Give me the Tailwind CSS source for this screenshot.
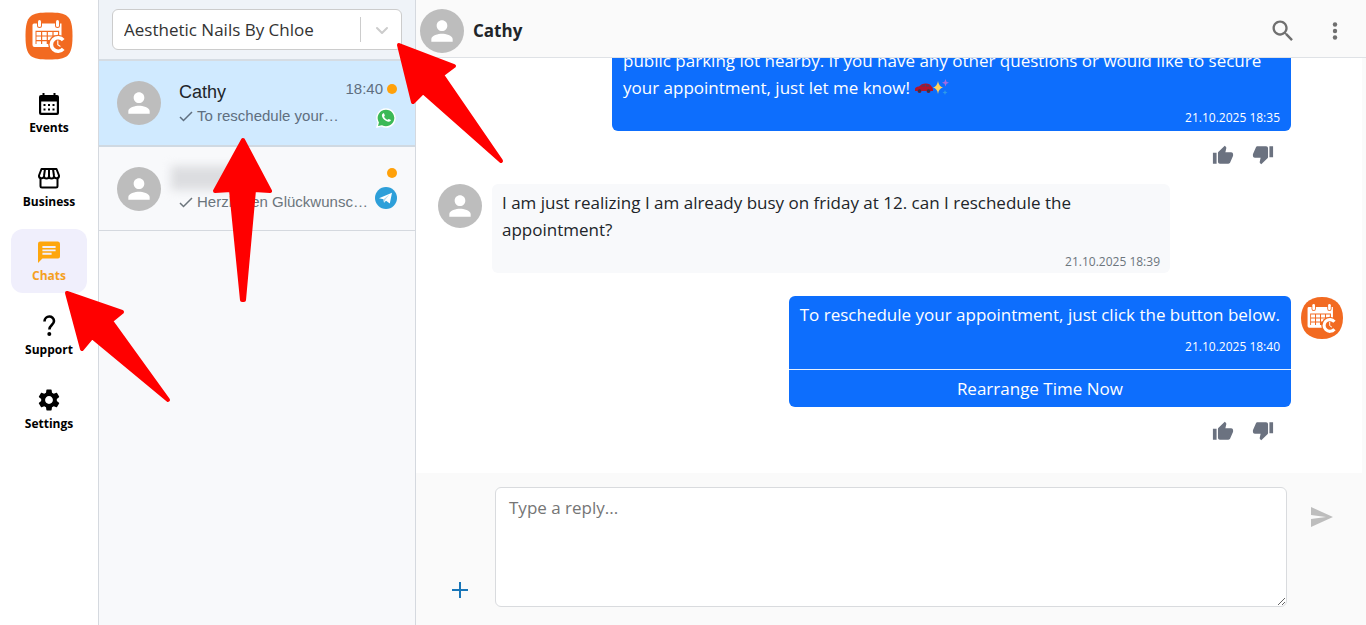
<!DOCTYPE html>
<html lang="en">
<head>
  <meta charset="UTF-8">
  <meta name="viewport" content="width=device-width, initial-scale=1.0">
  <title>Chats</title>
  <script src="https://cdn.jsdelivr.net/npm/@tailwindcss/browser@4"></script>
</head>
<body class="relative h-screen flex overflow-hidden bg-white text-[#212529] font-['Open_Sans','Noto_Sans',sans-serif]">

  <!-- Shared icons -->
  <svg class="hidden" aria-hidden="true">
    <symbol id="person" viewBox="0 0 24 24">
      <path d="M12 12c2.21 0 4-1.79 4-4s-1.79-4-4-4-4 1.79-4 4 1.79 4 4 4zm0 2c-2.67 0-8 1.34-8 4v2h16v-2c0-2.66-5.33-4-8-4z"/>
    </symbol>
    <symbol id="thumb-up" viewBox="0 0 24 24">
      <path d="M1 21.500h4V9.600H1zM23 11.200c0-1.200-1-2.100-2.100-2.100h-6.300l1-4.600v-.4c0-.4-.2-.8-.5-1.100L13.900 1.800 7.100 8.400c-.4.4-.6.9-.6 1.500v9.500c0 1.200 1 2.100 2.100 2.100h9.300c.9 0 1.600-.5 1.900-1.300l3.100-7c.1-.2.1-.5.1-.8z"/>
    </symbol>
    <symbol id="logo-mark" viewBox="0 0 48 48">
      <g fill="#fff">
        <rect x="13" y="8" width="3" height="7" rx="1.500"/>
        <rect x="31" y="8" width="3" height="7" rx="1.500"/>
        <path d="M9 11.500h3v2a2.500 2.500 0 0 0 5 0v-2h13v2a2.500 2.500 0 0 0 5 0v-2h1.500V24h-2.300v-5.200H10.500V32H25v3H9.500Q7.500 35 7.500 33V13q0-1.500 1.500-1.500z"/>
        <path d="M11.500 20h4.500v3.500h-4.500zM17.200 20h4.500v3.500h-4.500zM22.900 20h4.500v3.500h-4.500zM28.600 20h4.400v3.500h-4.400zM11.500 24.600h4.500v3.500h-4.500zM17.200 24.600h4.500v3.500h-4.500zM22.900 24.600h4.500v3.500h-4.500zM11.500 29.200h4.500V32h-4.500zM17.200 29.200h4.500V32h-4.500z"/>
      </g>
      <circle cx="33" cy="32.500" r="9.800" fill="#f26a21"/>
      <path d="M38.200 28.200A6.700 6.700 0 1 0 38.200 36.800" fill="none" stroke="#fff" stroke-width="3.600"/>
      <path d="M32.800 28.500v4.300l2.600 1.700" fill="none" stroke="#fff" stroke-width="1.100"/>
    </symbol>
  </svg>

  <!-- Main navigation -->
  <nav class="w-[99px] shrink-0 border-r border-[#d5d9df] bg-white flex flex-col items-center pt-3">
    <a href="#" aria-label="Home" class="block size-12">
      <svg class="size-12" viewBox="0 0 48 48">
        <path d="M24 .5C42 .5 47.500 3 47.500 24S42 47.500 24 47.500 .5 45 .5 24 6 .5 24 .5z" fill="#f26a21"/>
        <use href="#logo-mark"/>
      </svg>
    </a>

    <div class="mt-[21px] flex flex-col gap-2.5 text-xs leading-4 font-bold text-black">
      <a href="#" class="w-[76px] h-16 flex flex-col items-center pt-[11px] gap-1">
        <svg class="size-6" viewBox="0 0 24 24" fill="currentColor">
          <path fill-rule="evenodd" d="M5.500 1h2v2h9V1h2v2H20a2 2 0 0 1 2 2v16a2 2 0 0 1-2 2H4a2 2 0 0 1-2-2V5a2 2 0 0 1 2-2h1.500zM4.200 9.500V20.800h15.600V9.500z"/>
          <path d="M6.500 12h2v2h-2zM11 12h2v2h-2zM15.500 12h2v2h-2zM6.500 16.500h2v2h-2zM11 16.500h2v2h-2zM15.500 16.500h2v2h-2z"/>
        </svg>
        Events
      </a>
      <a href="#" class="w-[76px] h-16 flex flex-col items-center pt-[11px] gap-1">
        <svg class="size-6" viewBox="0 0 24 24" fill="none" stroke="currentColor" stroke-width="2" stroke-linejoin="round">
          <path d="M4.500 3h15L22 9.500a2.500 2.500 0 0 1-5 .5 2.500 2.500 0 0 1-5 0 2.500 2.500 0 0 1-5 0 2.500 2.500 0 0 1-5-.5zM8 3l-1 7M12 3v7M16 3l1 7"/>
          <path d="M3.500 12.500V20q0 1.500 1.500 1.500h14q1.500 0 1.500-1.500v-7.500"/>
        </svg>
        Business
      </a>
      <a href="#" aria-current="page" class="w-[76px] h-16 flex flex-col items-center pt-[11px] gap-1 rounded-xl bg-[#f0effc] text-[#f5a01f]">
        <svg class="size-6" viewBox="0 0 24 24" fill="#fea60d">
          <path fill-rule="evenodd" d="M21 1.500H3.200A2.200 2.200 0 0 0 1 3.700V23l4.400-4.400H21a2 2 0 0 0 2-2V3.700a2.200 2.200 0 0 0-2-2.200zM5.400 6h13.200v1.900H5.400zm0 3.400h13.200v1.900H5.400zm0 3.400h9.200v1.900H5.400z"/>
        </svg>
        Chats
      </a>
      <a href="#" class="w-[76px] h-16 flex flex-col items-center pt-[11px] gap-1">
        <svg class="size-6" viewBox="0 0 24 24">
          <path d="M7.500 7.500C7.500 1 17 1 17 7c0 4-4.600 4-4.600 8.500" fill="none" stroke="currentColor" stroke-width="2.600"/>
          <circle cx="12.300" cy="20" r="2" fill="currentColor"/>
        </svg>
        Support
      </a>
      <a href="#" class="w-[76px] h-16 flex flex-col items-center pt-[11px] gap-1">
        <svg class="size-6" viewBox="1 1 22 22" fill="currentColor">
          <path d="M19.140 12.940c.04-.3.060-.61.060-.94 0-.32-.02-.64-.07-.94l2.030-1.580c.18-.14.230-.41.120-.61l-1.920-3.320c-.12-.22-.37-.29-.59-.22l-2.390.96c-.5-.38-1.030-.7-1.620-.94l-.36-2.540c-.04-.24-.24-.41-.48-.41h-3.840c-.24 0-.43.17-.47.41l-.36 2.540c-.59.24-1.130.57-1.620.94l-2.390-.96c-.22-.08-.47 0-.59.22L2.740 8.870c-.12.21-.08.47.12.61l2.030 1.580c-.05.3-.09.63-.09.940s.02.640.070.940l-2.030 1.580c-.18.14-.23.410-.12.610l1.920 3.320c.12.22.37.29.59.22l2.390-.96c.5.380 1.030.7 1.620.94l.36 2.540c.05.240.240.410.480.410h3.840c.24 0 .440-.17.470-.41l.36-2.540c.59-.24 1.130-.56 1.620-.94l2.390.96c.22.080.470 0 .59-.22l1.920-3.320c.12-.22.070-.47-.12-.61l-2.010-1.580zM12 15.600c-1.980 0-3.600-1.620-3.600-3.600s1.620-3.600 3.600-3.600 3.600 1.620 3.600 3.600-1.620 3.600-3.600 3.600z"/>
        </svg>
        Settings
      </a>
    </div>
  </nav>

  <!-- Conversation list -->
  <aside class="w-[317px] shrink-0 border-r border-[#d5d9df] bg-[#f8f9fb] flex flex-col">
    <div class="h-[61px] px-[13px] pt-[9px] bg-[#eff3f8] border-b-2 border-[#d5dce3]">
      <div class="relative">
        <select id="company" aria-label="Company" class="appearance-none w-full h-[41px] pl-[11px] pr-12 rounded-md border border-[#cccccc] bg-white text-[17px] text-[#333]">
          <option>Aesthetic Nails By Chloe</option>
        </select>
        <span class="absolute right-0 inset-y-2 w-[42px] border-l border-[#cccccc] flex items-center justify-center pointer-events-none">
          <svg class="size-5" viewBox="0 0 20 20" fill="none" stroke="#ccc" stroke-width="2" stroke-linecap="round" stroke-linejoin="round">
            <path d="M5 8l5 5 5-5"/>
          </svg>
        </span>
      </div>
    </div>

    <a href="#" class="h-[86px] px-[18px] pt-5 flex gap-[18px] bg-[#d0eaff] border-b-2 border-[#cfd9e2] font-['Liberation_Sans',Arial,sans-serif]">
      <span class="size-11 shrink-0 rounded-full bg-[#bdbdbd] flex items-center justify-center">
        <svg class="size-8 fill-white"><use href="#person"/></svg>
      </span>
      <span class="flex-1 min-w-0">
        <span class="flex items-center justify-between h-[22px]">
          <span class="text-lg leading-[22px]">Cathy</span>
          <span class="flex items-center gap-1 text-[15px] text-[#5f6f80] -mt-1.5">18:40 <i class="size-2.5 rounded-full bg-[#ffa10a]"></i></span>
        </span>
        <span class="flex items-center justify-between h-[26px] text-[15px] text-[#5f6f80]">
          <span class="flex items-center gap-1">
            <svg class="size-3.5" viewBox="0 0 14 14" fill="none" stroke="currentColor" stroke-width="1.500"><path d="M1 8l3.500 3.500L13 3"/></svg>
            To reschedule your…
          </span>
          <svg class="size-5 mr-px mt-1" viewBox="0 0 20 20" role="img" aria-label="WhatsApp">
            <path d="M10 1a9 9 0 1 1-4.300 16.900L1 19l1.200-4.500A9 9 0 0 1 10 1z" fill="#3cb956" stroke="#fff" stroke-width="1.400"/>
            <path d="M6.900 5.400c.4-.4 1-.3 1.200.2l.7 1.600c.2.500-.7 1.200-.7 1.500.6 1.400 1.700 2.400 3.200 3 .4.100 1-1 1.500-.8l1.700.8c.5.300.4 1 0 1.400-2.700 2.500-9-2.400-8.600-6 .1-.7.500-1.300 1-1.700z" fill="#fff"/>
          </svg>
        </span>
      </span>
    </a>

    <a href="#" class="h-[84px] px-[18px] pt-5 flex gap-[18px] border-b border-[#d5d9df] font-['Liberation_Sans',Arial,sans-serif]">
      <span class="size-11 shrink-0 rounded-full bg-[#bdbdbd] flex items-center justify-center">
        <svg class="size-8 fill-white"><use href="#person"/></svg>
      </span>
      <span class="flex-1 min-w-0">
        <span class="flex items-center justify-between h-[22px]">
          <span class="w-20 h-6 -ml-2 bg-[#dcdde0] blur-[5px]"></span>
          <i class="size-2.5 -mt-2.5 rounded-full bg-[#ffa10a]"></i>
        </span>
        <span class="flex items-center justify-between h-[26px] text-[15px] text-[#6b757c]">
          <span class="flex items-center gap-1 whitespace-nowrap">
            <svg class="size-3.5" viewBox="0 0 14 14" fill="none" stroke="currentColor" stroke-width="1.500"><path d="M1 8l3.500 3.500L13 3"/></svg>
            Herzlichen Glückwunsc…
          </span>
          <svg class="size-[22px] shrink-0 -mt-2" viewBox="0 0 22 22" role="img" aria-label="Telegram">
            <circle cx="11" cy="11" r="11" fill="#2d9fd9"/>
            <path d="M4 11.200L17 5.700l-2.200 10.700-3.800-2.700-2 2-.5-3.500z" fill="#fff"/>
            <path d="M8.500 12.200l6-4.700-4.300 5.300-1.200 2.900z" fill="#b8d8ea"/>
          </svg>
        </span>
      </span>
    </a>
  </aside>

  <!-- Chat -->
  <main class="flex-1 min-w-0 flex flex-col">
    <header class="h-[58px] shrink-0 pl-1 pr-[19px] flex items-center bg-[#fafafa] border-b border-[#dfe2e6]">
      <span class="size-11 shrink-0 mt-[5px] rounded-full bg-[#bdbdbd] flex items-center justify-center">
        <svg class="size-8 fill-white"><use href="#person"/></svg>
      </span>
      <h1 class="ml-[9px] mt-[5px] text-[17px] font-bold">Cathy</h1>
      <button aria-label="Search" class="ml-auto mt-[5px] size-6">
        <svg class="size-7 -m-0.5" viewBox="0 0 24 24" fill="#6f6f6f">
          <path d="M15.500 14h-.79l-.28-.27C15.410 12.590 16 11.110 16 9.500 16 5.910 13.090 3 9.500 3S3 5.910 3 9.500 5.910 16 9.500 16c1.610 0 3.090-.59 4.230-1.570l.27.28v.79l5 4.990L20.490 19l-4.990-5zm-6 0C7.010 14 5 11.990 5 9.500S7.010 5 9.500 5 14 7.010 14 9.500 11.990 14 9.500 14z"/>
        </svg>
      </button>
      <button aria-label="More" class="ml-7 mt-[5px] size-6">
        <svg class="size-6" viewBox="0 0 24 24" fill="#6f6f6f">
          <circle cx="12" cy="5.500" r="2.200"/><circle cx="12" cy="12" r="2.200"/><circle cx="12" cy="18.500" r="2.200"/>
        </svg>
      </button>
    </header>

    <section class="flex-1 min-h-0 overflow-hidden flex flex-col justify-end pl-[22px] pr-[19px] border-r-4 border-[#fafafa]">
      <!-- sent -->
      <div class="shrink-0 ml-auto mr-[52px] w-full max-w-[679px] px-[11px] pb-1 rounded-md bg-[#0d6efd] text-white">
        <p class="text-[17px] leading-[27px]">public parking lot nearby. If you have any other questions or would like to secure<br>your appointment, just let me know!
          <svg class="inline w-9 h-5 -mt-1" viewBox="0 0 36 20" role="img" aria-label="car, sparkles">
            <path d="M1 12q0-2 4-2.500Q8 6 12 6.500q4 0 5.500 3 1.500.5 1.500 4.500h-2.500a2 2 0 0 1-4 0H7.500a2 2 0 0 1-4 0H1z" fill="#b3122b"/>
            <path d="M7 9.500q1.500-2 4-2v2zM12 7.500q3 0 4 2h-4z" fill="#4f3a63"/>
            <circle cx="5.500" cy="14" r="1.700" fill="#33344a"/><circle cx="14.500" cy="14" r="1.700" fill="#33344a"/>
            <path d="M24 4q.7 5.300 5 6.500-4.300 1.200-5 6.500-.7-5.300-5-6.500 4.300-1.200 5-6.500z" fill="#ffd45c"/>
            <path d="M31.500 2l1 2.800 2.500.9-2.500 1-1 2.800-1-2.800-2.500-1 2.500-.9z" fill="#a46ae0"/>
            <path d="M31 13l.7 1.800 1.800.7-1.800.7L31 18l-.7-1.800-1.800-.7 1.800-.7z" fill="#2f9be8"/>
          </svg>
        </p>
        <p class="mt-2 text-right text-xs leading-[18px]">21.10.2025 18:35</p>
      </div>
      <div class="shrink-0 mr-[69px] h-[53px] pt-[13px] flex justify-end gap-[18px]">
        <button aria-label="Like" class="size-[22px]"><svg class="size-[22px] fill-[#6b7280]"><use href="#thumb-up"/></svg></button>
        <button aria-label="Dislike" class="size-[22px]"><svg class="size-[22px] rotate-180 fill-[#6b7280]"><use href="#thumb-up"/></svg></button>
      </div>

      <!-- received -->
      <div class="shrink-0 flex items-start gap-2.5">
        <span class="size-11 shrink-0 rounded-full bg-[#bdbdbd] flex items-center justify-center">
          <svg class="size-8 fill-white"><use href="#person"/></svg>
        </span>
        <div class="w-full max-w-[678px] px-2.5 pt-[5px] pb-0.5 rounded-md bg-[#f8f9fb]">
          <p class="text-[17px] leading-[27px]">I am just realizing I am already busy on friday at 12. can I reschedule the<br>appointment?</p>
          <p class="mt-2.5 text-right text-xs leading-[18px] text-[#6c757d]">21.10.2025 18:39</p>
        </div>
      </div>

      <!-- sent with action -->
      <div class="shrink-0 mt-[23px] flex justify-end items-start gap-2.5">
        <div class="rounded-md bg-[#0d6efd] text-white overflow-hidden">
          <div class="px-[11px] pt-[5px] pb-[13px]">
            <p class="text-[17px] leading-[27px]">To reschedule your appointment, just click the button below.</p>
            <p class="mt-2.5 text-right text-xs leading-[18px]">21.10.2025 18:40</p>
          </div>
          <button class="w-full h-[38px] border-t border-white/90 text-[17px]">Rearrange Time Now</button>
        </div>
        <svg class="size-[42px] mt-px shrink-0" viewBox="0 0 48 48" role="img" aria-label="Assistant">
          <path d="M24 0C39 0 48 9 48 24S39 48 24 48 0 39 0 24 9 0 24 0z" fill="#f26a21"/>
          <use href="#logo-mark"/>
        </svg>
      </div>
      <div class="shrink-0 mr-[69px] h-[66px] pt-[13px] flex justify-end gap-[18px]">
        <button aria-label="Like" class="size-[22px]"><svg class="size-[22px] fill-[#6b7280]"><use href="#thumb-up"/></svg></button>
        <button aria-label="Dislike" class="size-[22px]"><svg class="size-[22px] rotate-180 fill-[#6b7280]"><use href="#thumb-up"/></svg></button>
      </div>
    </section>

    <!-- Composer -->
    <form class="shrink-0 h-[152px] pl-8 pr-8 pt-3.5 pb-[18px] flex bg-[#fafafa]">
      <button type="button" aria-label="Attach" class="self-end mb-[5px] size-6">
        <svg class="size-6" viewBox="0 0 24 24" stroke="#1976b8" stroke-width="2"><path d="M4 12h16M12 4v16"/></svg>
      </button>
      <textarea id="reply" aria-label="Reply" placeholder="Type a reply..." class="ml-[23px] flex-1 h-[120px] px-[13px] py-1.5 rounded-md border border-[#d9dbde] bg-white text-[17px] leading-[27px] placeholder:text-[#757575] resize"></textarea>
      <button type="submit" aria-label="Send" class="ml-[23px] mt-[18px] self-start size-6">
        <svg class="size-6" viewBox="0 0 24 24" fill="#bdbdbd"><path d="M1 22l22-10L1 2v8l15 2-15 2z"/></svg>
      </button>
    </form>
  </main>

  <!-- Pointer arrows -->
  <svg class="absolute top-0 left-0 w-[1366px] h-[625px] max-w-none pointer-events-none" viewBox="0 0 1366 625" fill="#ff0000" stroke="#ff0000" stroke-width="4" stroke-linejoin="round" aria-hidden="true">
    <path d="M67 293L122 312 111 321 168 400 92 337 82 349z"/>
    <path d="M243 140L270 191 254 190 244 300H242L231 190 215 191z"/>
    <path d="M399 45L454 66 442 75 501 161 423 92 413 102z"/>
  </svg>

</body>
</html>
